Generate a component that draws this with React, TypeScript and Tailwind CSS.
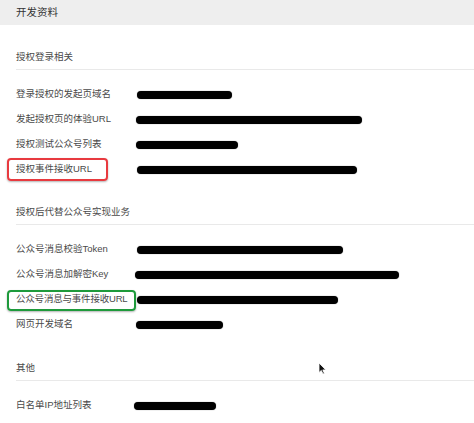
import React from "react";

type Row = { label: string; bar: [number, number]; mark?: "red" | "green" };
type Section = { title: string; rows: Row[]; pb: string };

const sections: Section[] = [
  {
    title: "授权登录相关",
    pb: "pb-[18px]",
    rows: [
      { label: "登录授权的发起页域名", bar: [137, 232] },
      { label: "发起授权页的体验URL", bar: [136, 362] },
      { label: "授权测试公众号列表", bar: [136, 238] },
      { label: "授权事件接收URL", bar: [137, 357], mark: "red" },
    ],
  },
  {
    title: "授权后代替公众号实现业务",
    pb: "pb-[19px]",
    rows: [
      { label: "公众号消息校验Token", bar: [137, 343] },
      { label: "公众号消息加解密Key", bar: [135, 399] },
      { label: "公众号消息与事件接收URL", bar: [137, 338], mark: "green" },
      { label: "网页开发域名", bar: [136, 223] },
    ],
  },
  {
    title: "其他",
    pb: "pb-0",
    rows: [{ label: "白名单IP地址列表", bar: [134, 216] }],
  },
];

function RowItem({ row }: { row: Row }) {
  return (
    <div className="relative flex h-[25px] items-center pl-4">
      <div className="w-[120px] shrink-0">
        <span
          className={
            row.mark === "green"
              ? "whitespace-nowrap tracking-[-0.2px]"
              : "whitespace-nowrap"
          }
        >
          {row.label}
        </span>
      </div>
      <div
        className="h-2 rounded-full bg-black shadow-[0_0_1px_rgba(0,0,0,0.6)]"
        style={{ marginLeft: row.bar[0] - 136, width: row.bar[1] - row.bar[0] }}
      />
      {row.mark === "red" && (
        <div className="pointer-events-none absolute left-[7px] top-[1px] h-[23px] w-[101px] rounded-[4px] border-2 border-[#e83a3f] shadow-[0_1px_2px_rgba(0,0,0,0.3)]" />
      )}
      {row.mark === "green" && (
        <div className="pointer-events-none absolute left-[7px] top-[3px] h-[21px] w-[129px] rounded-[4px] border-[2.5px] border-[#1e9a3b] shadow-[0_1px_2px_rgba(0,0,0,0.3)]" />
      )}
    </div>
  );
}

export default function App() {
  return (
    <div
      className="relative h-[423px] w-[474px] overflow-hidden bg-white text-[9.5px] text-[#4a4a4a]"
      style={{ fontFamily: '"Liberation Sans", "Noto Sans CJK SC", sans-serif' }}
    >
      <div className="flex h-[25px] items-center bg-[#eeeeee] pl-4 text-[10.5px] text-[#333333]">
        开发资料
      </div>
      <div className="pt-5">
        {sections.map((s) => (
          <div key={s.title} className={s.pb}>
            <div className="ml-4 flex h-[25px] items-center border-b border-[#e9e9e9]">
              {s.title}
            </div>
            <div className="pt-3">
              {s.rows.map((r) => (
                <RowItem key={r.label} row={r} />
              ))}
            </div>
          </div>
        ))}
      </div>
      <svg
        className="absolute left-[318px] top-[362px]"
        width="9"
        height="13"
        viewBox="0 0 9 13"
      >
        <path
          d="M1 1 L1 10.5 L3.3 8.4 L5 12 L6.4 11.4 L4.8 7.9 L7.8 7.9 Z"
          fill="#111"
          stroke="#fff"
          strokeWidth="0.8"
        />
      </svg>
    </div>
  );
}
